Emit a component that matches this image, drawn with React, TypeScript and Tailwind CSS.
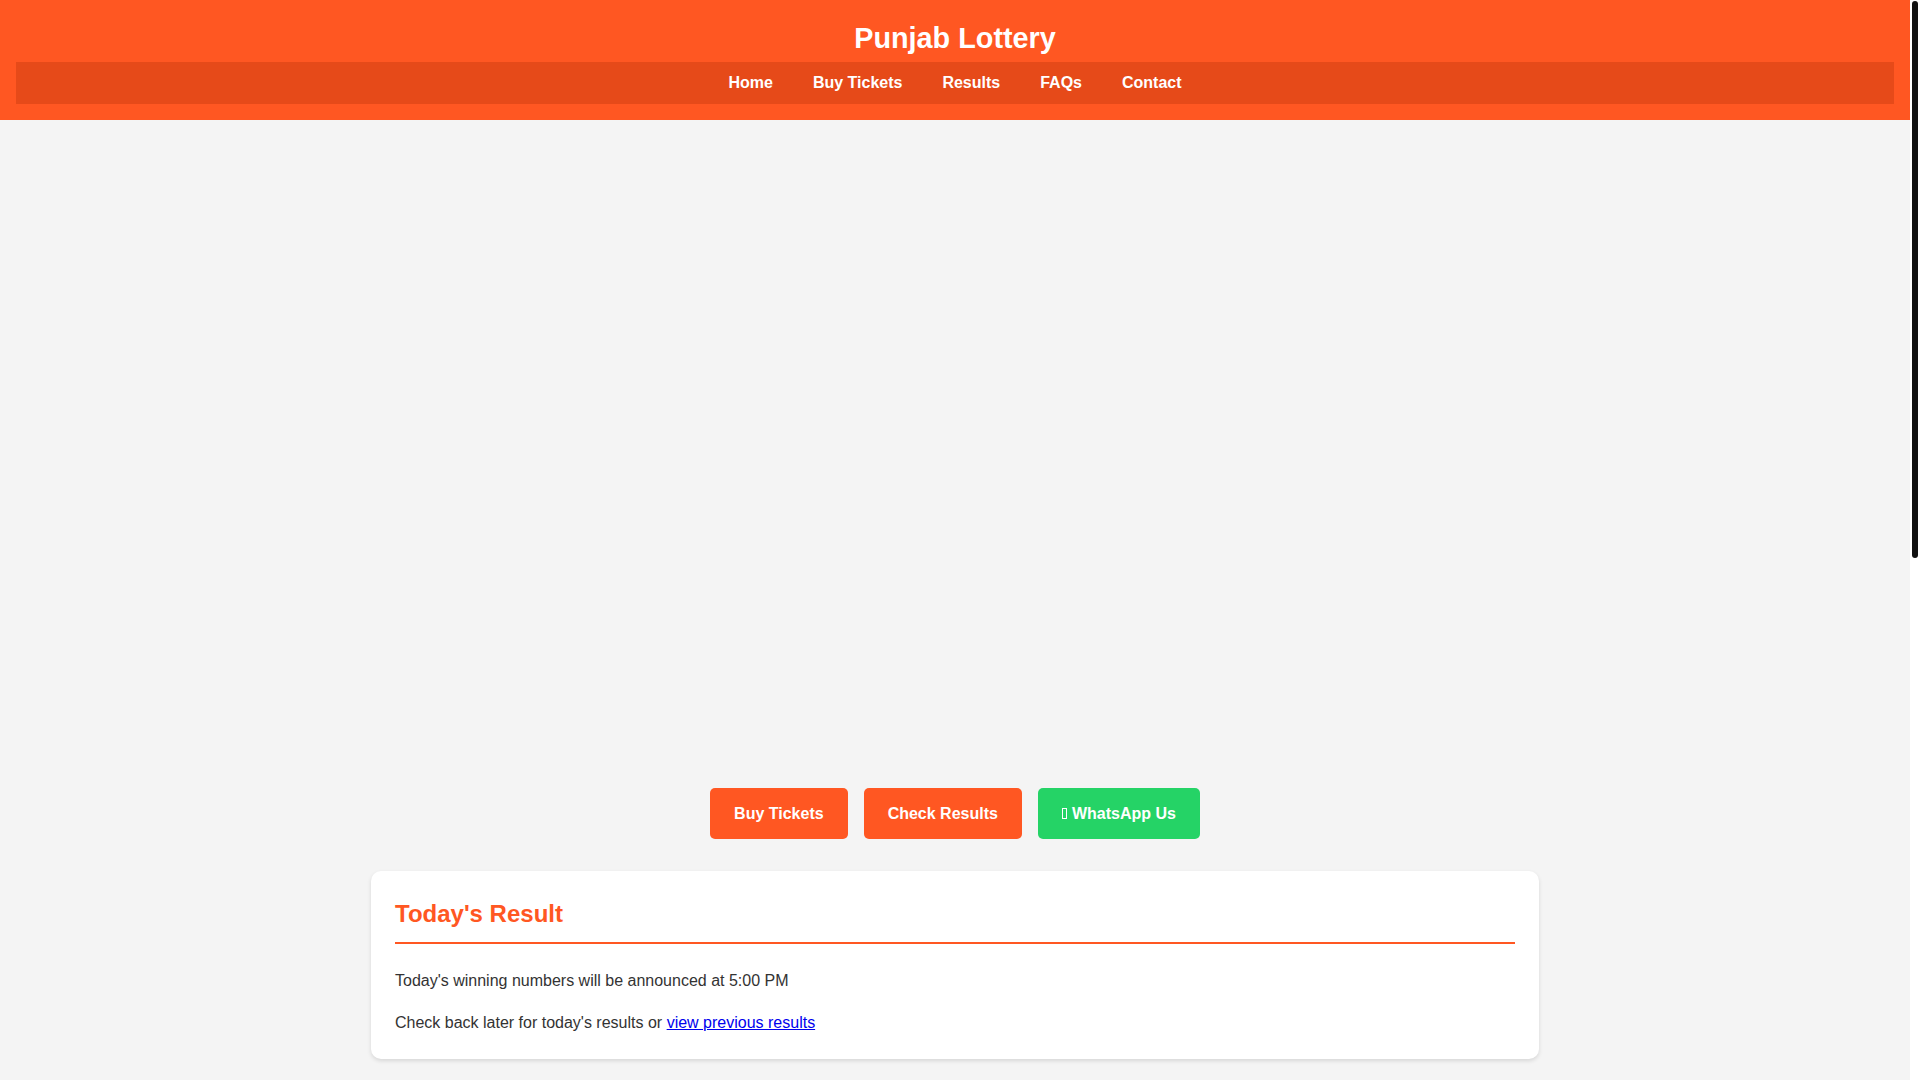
import React from 'react';

const navLinks = ['Home', 'Buy Tickets', 'Results', 'FAQs', 'Contact'];

export default function App() {
  return (
    <div
      className="relative h-screen bg-[#f4f4f4] text-[#333] text-base"
      style={{ fontFamily: '"Liberation Sans", Arial, sans-serif' }}
    >
      <div className="h-full overflow-y-auto pr-[10px] [scrollbar-width:none]">
        <div className="min-h-[2090px]">
          {/* Header */}
          <header className="bg-[#ff5722] px-4 pt-[21px] pb-4 text-white">
            <h1 className="text-center text-[28.8px] leading-[34px] font-bold mb-[7px]">Punjab Lottery</h1>
            <nav className="bg-[#e64a19] h-[42px] flex items-center justify-center gap-[40px]">
              {navLinks.map(link => (
                <a key={link} href="#" className="text-white font-bold text-base leading-[18px]">
                  {link}
                </a>
              ))}
            </nav>
          </header>

          {/* Hero slider (image not loaded) */}
          <section className="h-[648px]" />

          {/* Action buttons */}
          <div className="mt-5 flex justify-center gap-4">
            <a href="#" className="bg-[#ff5722] text-white font-bold px-6 py-4 leading-[19px] rounded-[5px]">
              Buy Tickets
            </a>
            <a href="#" className="bg-[#ff5722] text-white font-bold px-6 py-4 leading-[19px] rounded-[5px]">
              Check Results
            </a>
            <a href="#" className="bg-[#25d366] text-white font-bold px-6 py-4 leading-[19px] rounded-[5px]">
              {/* icon font glyph did not load: empty box */}
              <span className="inline-block w-[5px] h-[11px] border border-white align-baseline mr-[5px]" />
              WhatsApp Us
            </a>
          </div>

          {/* Today's result */}
          <main className="max-w-[1200px] mx-auto px-4 mt-8">
            <div className="bg-white rounded-[10px] shadow-[0_2px_4px_rgba(0,0,0,0.12)] p-6">
              <h2 className="text-[#ff5722] text-2xl font-bold leading-[38px] pb-[9px] border-b-2 border-[#ff5722] mb-6">
                Today's Result
              </h2>
              <p className="leading-[1.6] mb-4">Today's winning numbers will be announced at 5:00 PM</p>
              <p className="leading-[1.6]">
                Check back later for today's results or{' '}
                <a href="#" className="text-[#0000ee] underline">view previous results</a>
              </p>
            </div>
          </main>
        </div>
      </div>

      {/* page scrollbar */}
      <div className="absolute right-0 top-0 h-full w-[10px] bg-white">
        <div className="ml-[2px] mt-[1px] w-[6px] h-[557px] rounded-[3px] bg-[#111]" />
      </div>
    </div>
  );
}
